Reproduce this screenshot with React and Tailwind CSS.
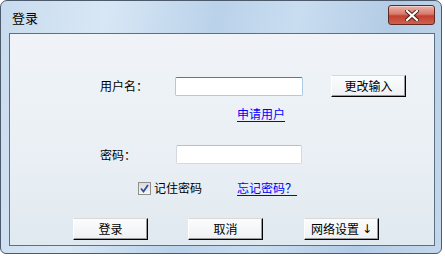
import React from "react";

const font = { fontFamily: '"Noto Sans CJK SC", "Noto Sans", sans-serif' };

function WinButton({ children }) {
  return (
    <button className="w-[75px] h-[22px] flex items-center justify-center text-[12px] text-black bg-[linear-gradient(#fbfcfd,#eef1f4)] border-t border-l border-t-[#d8d8d8] border-l-[#ffffff] border-r border-b border-r-black border-b-black shadow-[inset_-1px_-1px_0_#9a9a9a] leading-none">
      {children}
    </button>
  );
}

export default function App() {
  return (
    <div className="w-[445px] h-[257px] bg-white" style={font}>
      <div className="w-[442px] h-[254px] border border-[#4c5a6b] rounded-t-[7px] rounded-b-[6px] bg-[linear-gradient(100deg,#c8dbee_0%,#d8e7f5_22%,#bad2ea_45%,#c9ddf0_62%,#b2cbe5_82%,#c4d8ec_100%)] flex flex-col overflow-hidden">
        <div className="h-[32px] flex items-start justify-between pl-[11px] pr-[6px]">
          <span className="text-[13px] text-black mt-[10px] leading-none">登录</span>
          <div className="mt-[4px] w-[47px] h-[20px] rounded-[3px] border border-[#5e2a22] bg-[linear-gradient(#eab3a8_0%,#d8796b_45%,#c2402f_55%,#d0604f_100%)] flex items-center justify-center shadow-[inset_0_1px_0_#f5d0c8]">
            <svg width="14" height="11" viewBox="0 0 14 11">
              <path d="M2 1 L12 10 M12 1 L2 10" stroke="#4a1e18" strokeWidth="4" strokeLinecap="square" />
              <path d="M2 1 L12 10 M12 1 L2 10" stroke="#ffffff" strokeWidth="2.2" strokeLinecap="square" />
            </svg>
          </div>
        </div>
        <div className="ml-[8px] w-[426px] h-[213px] border border-[#5d6f82] bg-[linear-gradient(#f0f4f8,#e9eff4_60%,#e0e9f0)] flex flex-col text-[12px] text-black">
          <div className="mt-[41px] flex items-center h-[22px]">
            <span className="ml-[90px] w-[75px]">用户名：</span>
            <div className="w-[128px] h-[19px] bg-white rounded-[2px] border border-[#a9cbe6] border-t-[#3f7fb5]" />
            <div className="ml-[28px]">
              <WinButton>更改输入</WinButton>
            </div>
          </div>
          <div className="mt-[10px] ml-[227px] h-[14px] leading-[14px]">
            <span className="text-[#0000ff] underline underline-offset-2">申请用户</span>
          </div>
          <div className="mt-[24px] flex items-center h-[19px]">
            <span className="ml-[90px] w-[76px]">密码：</span>
            <div className="w-[126px] h-[19px] bg-white rounded-[2px] border border-[#d3d9df] border-t-[#b9c0c7]" />
          </div>
          <div className="mt-[17px] flex items-center h-[14px]">
            <div className="ml-[128px] w-[13px] h-[13px] border border-[#8e8f8f] bg-[linear-gradient(#dcdcdc,#f6f6f6)] flex items-center justify-center">
              <svg width="9" height="9" viewBox="0 0 9 9">
                <path d="M1 4.5 L3.5 7.5 L8 1" fill="none" stroke="#2d4f9e" strokeWidth="1.8" />
              </svg>
            </div>
            <span className="ml-[3px]">记住密码</span>
            <span className="ml-[35px] text-[#0000ff] underline underline-offset-2">忘记密码？</span>
          </div>
          <div className="mt-[23px] flex items-center">
            <div className="ml-[63px]">
              <WinButton>登录</WinButton>
            </div>
            <div className="ml-[40px]">
              <WinButton>取消</WinButton>
            </div>
            <div className="ml-[41px]">
              <WinButton>
                网络设置
                <span className="ml-[3px] text-black" style={{ fontFamily: '"DejaVu Sans", sans-serif' }}>
                  {"\u2193\uFE0E"}
                </span>
              </WinButton>
            </div>
          </div>
        </div>
      </div>
    </div>
  );
}
